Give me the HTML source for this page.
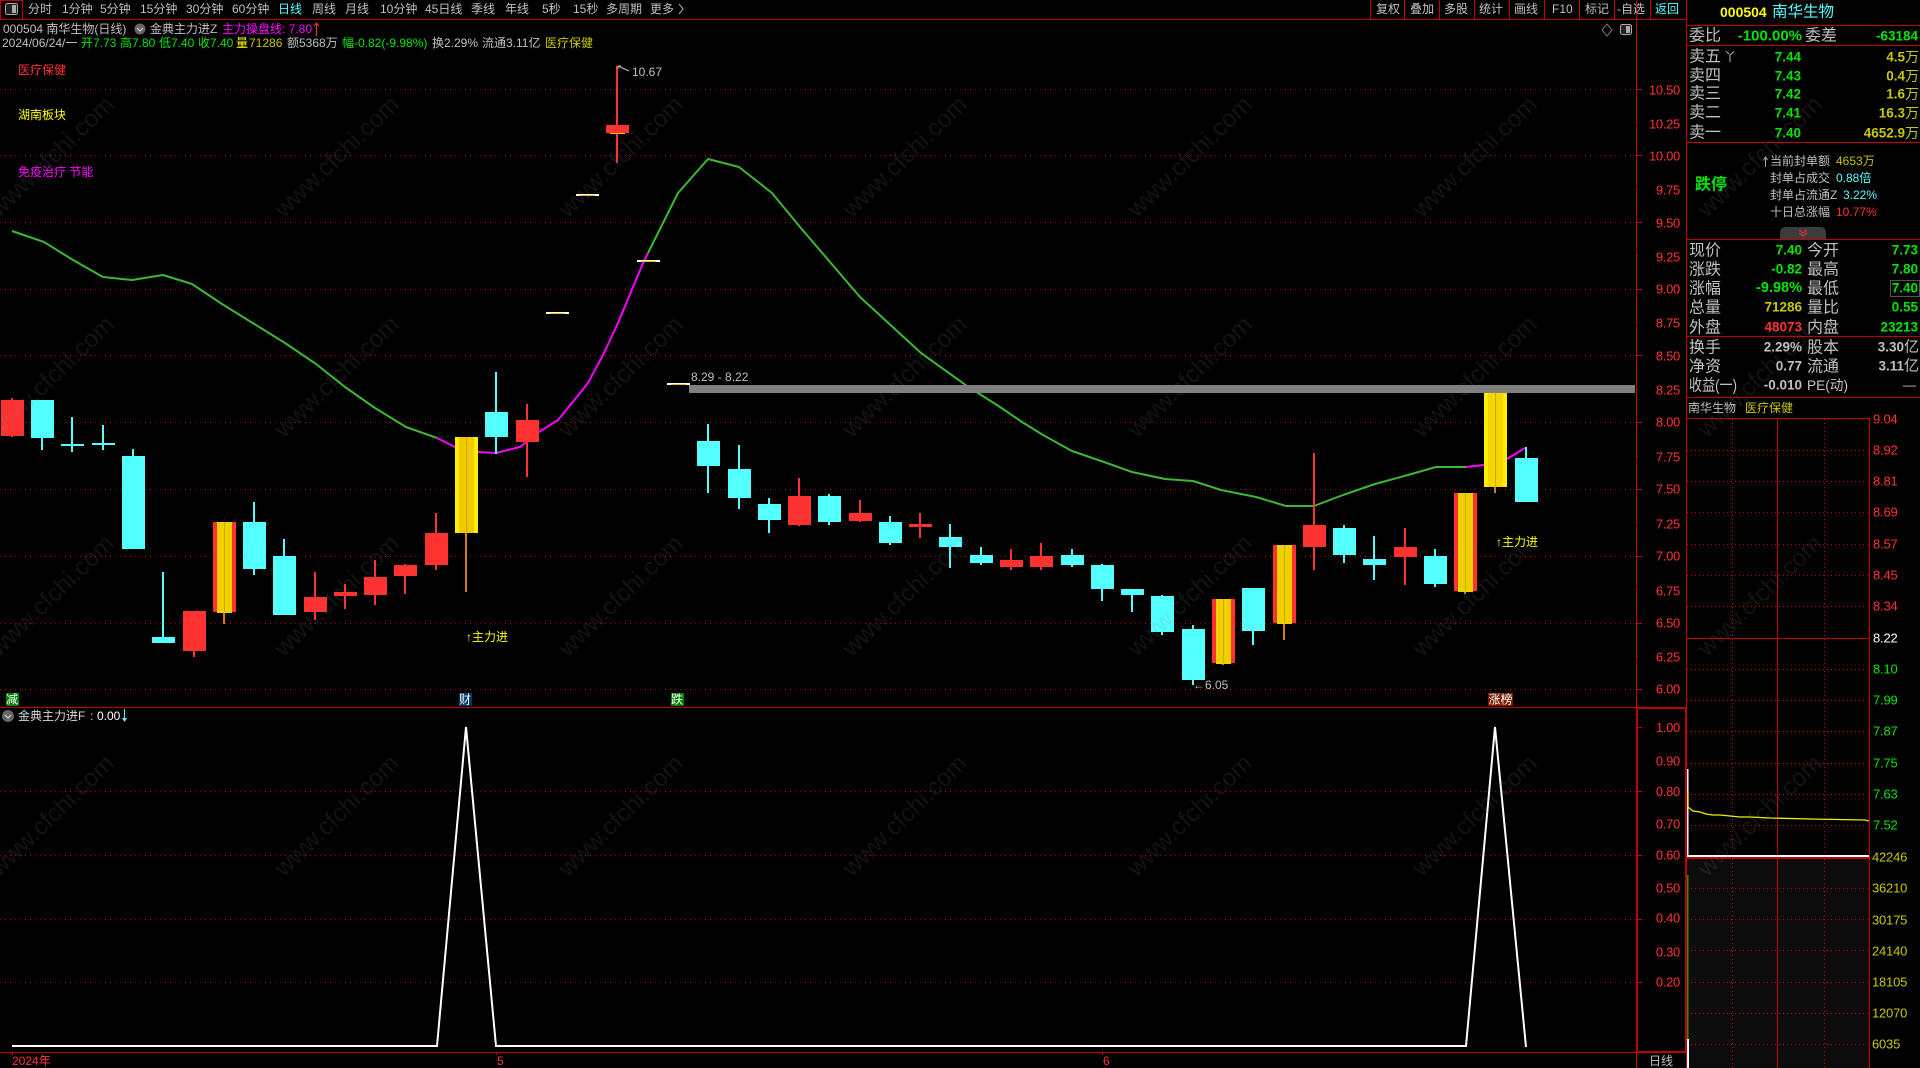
<!DOCTYPE html>
<html lang="zh"><head><meta charset="utf-8"><title>000504 南华生物</title>
<style>
html,body{margin:0;padding:0;background:#000;overflow:hidden;width:1920px;height:1068px}
svg{position:absolute;left:0;top:0;display:block;font-family:"Liberation Sans","Noto Sans CJK SC",sans-serif}
text{dominant-baseline:central;white-space:pre}
.t{font-size:12px;fill:#c0c0c0}
.r{fill:#ff3232}.g{fill:#00e600}.c{fill:#54ffff}.y{fill:#ffff00}.d{fill:#c8c800}.m{fill:#ff00ff}.w{fill:#fff}
.ax text{font-size:13px;fill:#ff3232;text-anchor:end;letter-spacing:-.3px}
.l{font-size:16px;fill:#c0c0c0}
.l2{font-size:16px;fill:#c0c0c0;transform:translateY(1px)}
.v{font-size:13.5px;font-weight:bold;text-anchor:end}
.wm text{font-size:24.5px;fill:rgba(128,128,128,.15);text-anchor:middle}
.q{font-size:12px}
</style></head><body>
<svg width="1920" height="1068" viewBox="0 0 1920 1068">
<rect width="1920" height="1068" fill="#000"/>
<!-- main grid -->
<g stroke="#b00000" stroke-dasharray="1 4" fill="none">
<path d="M0 89.500H1636M0 155.500H1636M0 222.500H1636M0 289.500H1636M0 355.500H1636M0 422.500H1636M0 489.500H1636M0 556.500H1636M0 623.500H1636M0 689.500H1636"/>
<path d="M0 791.500H1636M0 855.500H1636M0 919.500H1636M0 982.500H1636"/>
</g>
<!-- MA line -->
<g fill="none" stroke-width="2" stroke-linejoin="round">
<path stroke="#3cb832" d="M12 231L44 242L73 260L103 277L132 280L163 275L192 284L222 304L251 322L285 343L316 364L345 387L375 408L406 427L437 438"/>
<path stroke="#ff00ff" d="M437 438L455 447L478 452L496 453L520 447L539 432L558 420L580 393L588 383L603 355L618 323L633 287L643 263L648 253"/>
<path stroke="#3cb832" d="M648 253L678 193L708 159L739 167L772 193L800 227L860 297L921 353L967 386L1000 407L1022 422L1043 435L1072 451L1104 462L1132 472L1165 479L1193 481L1221 490L1256 497L1286 506L1314 506L1343 495L1375 484L1408 475L1436 467L1466 467"/>
<path stroke="#ff00ff" d="M1466 467L1484 465L1507 459L1525 448"/>
</g>
<!-- grey bar -->
<rect x="689" y="385" width="946" height="8" fill="#808080"/>
<text x="691" y="377" class="t" fill="#b0b0b0">8.29 - 8.22</text>
<!-- candles: wicks -->
<path fill="none" stroke="#54ffff" stroke-width="2" d="M42 438V450M72 417V452M103 425V450M133 449V456M163 572V637M254 502V575M284 539V556M496 372V454M708 424V493M739 445V509M769 498V533M829 494V525M890 516V545M950 524V568M981 547V565M1072 549V567M1102 564V601M1132 595V612M1162 595V635M1193 625V685M1253 631V645M1344 525V563M1374 536V580M1435 549V587M1526 447V458"/>
<path fill="none" stroke="#ff3232" stroke-width="2" d="M12 398V437M194 651V657M315 572V620M345 584V609M375 560V605M405 564V594M436 513V570M527 404V477M617 66V163M799 478V526M860 500V522M920 513V538M1011 549V570M1041 543V570M1314 453V570M1405 528V585"/>
<path fill="none" stroke="#d08010" stroke-width="2" d="M224 612V624M466 533V592M1223 663V665M1284 623V640M1465 591V594M1495 487V493"/>
<!-- candles: bodies -->
<path fill="#54ffff" d="M31 400h23v38h-23zM61 444h23v2h-23zM92 443h23v2h-23zM122 456h23v93h-23zM152 637h23v6h-23zM243 522h23v47h-23zM273 556h23v59h-23zM485 412h23v25h-23zM697 441h23v25h-23zM728 469h23v29h-23zM758 504h23v16h-23zM818 496h23v26h-23zM879 522h23v21h-23zM939 537h23v10h-23zM970 555h23v8h-23zM1061 555h23v10h-23zM1091 565h23v24h-23zM1121 589h23v6h-23zM1151 596h23v36h-23zM1182 629h23v51h-23zM1242 588h23v43h-23zM1333 528h23v27h-23zM1363 559h23v6h-23zM1424 556h23v28h-23zM1515 458h23v44h-23z"/>
<path fill="#ff3232" d="M1 400h23v36h-23zM183 611h23v40h-23zM304 597h23v15h-23zM334 592h23v4h-23zM364 577h23v18h-23zM394 565h23v11h-23zM425 533h23v32h-23zM516 420h23v22h-23zM606 125h23v8h-23zM788 496h23v29h-23zM849 513h23v8h-23zM909 524h23v3h-23zM1000 560h23v7h-23zM1030 556h23v11h-23zM1303 525h23v22h-23zM1394 547h23v10h-23zM213 522h23v90h-23zM1212 599h23v64h-23zM1273 545h23v78h-23zM1454 493h23v98h-23z"/>
<path fill="#f0d000" d="M217 522h15v91h-15zM1216 599h15v65h-15zM1277 545h15v79h-15zM1458 493h15v99h-15z"/>
<path fill="#ffee00" d="M455 437h23v96h-23zM1484 393h23v94h-23z"/>
<path fill="#eecc00" d="M459 437h15v96h-15z"/>
<path fill="#f2d800" d="M1488 393h15v94h-15z"/>
<path fill="none" stroke="#d4a800" d="M224.500 522V612M1223.500 599V663M1284.500 545V623M1465.500 493V591M466.500 437V533M1495.500 393V487"/>
<!-- white dashes -->
<path fill="#fff" d="M546 312h23v2h-23zM576 194h23v2h-23zM637 260h23v2h-23zM667 383h23v2h-23z"/>
<path fill="#e8c800" d="M550 313h15v1h-15zM580 195h15v1h-15zM641 261h15v1h-15zM671 384h15v1h-15zM610 133h15v1h-15z"/>
<!-- high/low notes -->
<path fill="none" stroke="#c0c0c0" d="M618 66L629 71M618 66h3M618 66v3"/>
<text x="632" y="72" class="t">10.67</text>
<text x="1193" y="685" class="t">←6.05</text>
<text x="466" y="637" class="q y">↑主力进</text>
<text x="1496" y="542" class="q y">↑主力进</text>
<!-- tags -->
<rect x="6" y="693" width="13" height="13" fill="#008000"/><text x="6" y="699.500" class="q w">减</text>
<rect x="459" y="693" width="13" height="13" fill="#003366"/><text x="459" y="699.500" class="q w">财</text>
<rect x="671" y="693" width="13" height="13" fill="#008000"/><text x="671" y="699.500" class="q w">跌</text>
<rect x="1488" y="693" width="25" height="13" fill="#7a1a00"/><text x="1488.500" y="699.500" class="q w">涨榜</text>
<!-- labels -->
<text x="18" y="70" class="q r">医疗保健</text>
<text x="18" y="115" class="q y">湖南板块</text>
<text x="18" y="172" class="q m">免疫治疗 节能</text>
<!-- lower panel line -->
<path fill="none" stroke="#fff" stroke-width="2" d="M12 1046H437L466 727L496 1046H1466L1495 727L1526 1047"/>
<!-- chart separators -->
<g fill="#c00000">
<rect x="0" y="19" width="1686" height="1"/>
<rect x="0" y="707" width="1686" height="1"/>
<rect x="0" y="1052" width="1636" height="1"/>
<rect x="1636" y="0" width="1" height="1068"/>
<rect x="1636" y="707" width="2" height="345"/>
<rect x="1636" y="707" width="50" height="2"/>
<rect x="1636" y="1051" width="50" height="2"/>
<rect x="1686" y="0" width="1" height="1068"/>
<rect x="1685" y="707" width="2" height="345"/>
</g>
<g stroke="#c00000"><path d="M1636 89.500h6M1636 122.500h2M1636 155.500h6M1636 189.500h2M1636 222.500h6M1636 255.500h2M1636 289.500h6M1636 322.500h2M1636 355.500h6M1636 389.500h2M1636 422.500h6M1636 456.500h2M1636 489.500h6M1636 522.500h2M1636 556.500h6M1636 589.500h2M1636 623.500h6M1636 656.500h2M1636 689.500h6M1636 727.500h6M1636 759.500h2M1636 791.500h6M1636 823.500h2M1636 855.500h6M1636 887.500h2M1636 919.500h6M1636 951.500h2M1636 982.500h6"/></g>
<g class="ax">
<text x="1680" y="90">10.50</text><text x="1680" y="124">10.25</text><text x="1680" y="156">10.00</text><text x="1680" y="190">9.75</text><text x="1680" y="223">9.50</text><text x="1680" y="257">9.25</text><text x="1680" y="289">9.00</text><text x="1680" y="323">8.75</text><text x="1680" y="356">8.50</text><text x="1680" y="390">8.25</text><text x="1680" y="422">8.00</text><text x="1680" y="457">7.75</text><text x="1680" y="489">7.50</text><text x="1680" y="524">7.25</text><text x="1680" y="556">7.00</text><text x="1680" y="591">6.75</text><text x="1680" y="623">6.50</text><text x="1680" y="657">6.25</text><text x="1680" y="689">6.00</text>
<text x="1680" y="727.500">1.00</text><text x="1680" y="761">0.90</text><text x="1680" y="791.500">0.80</text><text x="1680" y="824">0.70</text><text x="1680" y="855">0.60</text><text x="1680" y="888">0.50</text><text x="1680" y="918">0.40</text><text x="1680" y="952">0.30</text><text x="1680" y="982">0.20</text>
</g>
<!-- lower header -->
<circle cx="8" cy="716" r="6" fill="#666"/><path d="M5 715l3 3 3-3" fill="none" stroke="#ddd"/>
<text x="18" y="716" class="q" fill="#d8d8d8">金典主力进F</text>
<text x="90" y="716" class="q" fill="#d8d8d8">:</text>
<text x="97" y="716" class="q w">0.00</text>
<path d="M124.500 709V718" fill="none" stroke="#54ffff"/><path d="M122 718h5l-2.500 4z" fill="#54ffff"/>
<!-- bottom axis -->
<text x="12" y="1061" class="q r">2024年</text>
<text x="497" y="1061" class="q r">5</text>
<text x="1103" y="1061" class="q r">6</text>
<path d="M12.500 1052v3M496.500 1052v3M1102.500 1052v3" stroke="#c00000"/>
<text x="1649" y="1061" class="t">日线</text>
<!-- top toolbar -->
<rect x="0.500" y="0.500" width="22" height="19" fill="none" stroke="#c00000"/>
<rect x="5.500" y="3.500" width="12" height="11" rx="2" fill="#222" stroke="#aaa"/><rect x="12" y="5" width="4" height="8" fill="#aaa"/>
<g class="t">
<text x="28" y="9">分时</text><text x="62" y="9">1分钟</text><text x="100" y="9">5分钟</text><text x="140" y="9">15分钟</text><text x="186" y="9">30分钟</text><text x="232" y="9">60分钟</text><text x="278" y="9" class="c">日线</text><text x="312" y="9">周线</text><text x="345" y="9">月线</text><text x="380" y="9">10分钟</text><text x="425" y="9">45日线</text><text x="471" y="9">季线</text><text x="505" y="9">年线</text><text x="542" y="9">5秒</text><text x="573" y="9">15秒</text><text x="606" y="9">多周期</text><text x="650" y="9">更多</text>
<path d="M679 4l4 5-4 5" fill="none" stroke="#c0c0c0"/>
<text x="1376" y="9">复权</text><text x="1410" y="9">叠加</text><text x="1444" y="9">多股</text><text x="1479" y="9">统计</text><text x="1514" y="9">画线</text><text x="1552" y="9">F10</text><text x="1585" y="9">标记</text><text x="1617" y="9">-自选</text><text x="1655" y="9" class="c">返回</text>
</g>
<path stroke="#c00000" d="M1370.500 0V19M1404.500 0V19M1439.500 0V19M1474.500 0V19M1509.500 0V19M1544.500 0V19M1579.500 0V19M1614.500 0V19M1650.500 0V19"/>
<!-- info rows -->
<text x="3" y="29" class="t">000504 南华生物(日线)</text>
<circle cx="140" cy="29" r="5.500" fill="#666"/><path d="M137 28l3 3 3-3" fill="none" stroke="#ddd"/>
<text x="150" y="29" class="t">金典主力进Z</text>
<text x="222" y="29" class="q m">主力操盘线: 7.80</text>
<path d="M316.500 23V36M314 26l2.500-3 2.500 3" fill="none" stroke="#ff3232"/>
<g class="q">
<text x="2" y="43" fill="#c0c0c0">2024/06/24/一</text>
<text x="81" y="43" class="g">开7.73</text><text x="120" y="43" class="g">高7.80</text><text x="159" y="43" class="g">低7.40</text><text x="198" y="43" class="g">收7.40</text>
<text x="236" y="43" class="y">量</text><text x="249" y="43" class="d">71286</text>
<text x="287" y="43" fill="#c0c0c0">额5368万</text>
<text x="342" y="43" class="g">幅-0.82(-9.98%)</text>
<text x="432" y="43" fill="#c0c0c0">换2.29%</text><text x="482" y="43" fill="#c0c0c0">流通3.11亿</text>
<text x="545" y="43" class="d">医疗保健</text>
</g>
<!-- icons at chart top right -->
<path d="M1607 24l5 6-5 6-5-6z" fill="none" stroke="#777"/>
<rect x="1620.500" y="24.500" width="11" height="10" rx="2" fill="#222" stroke="#aaa"/><rect x="1626" y="26" width="4" height="7" fill="#aaa"/>
<!-- right panel -->
<text x="1720" y="12" font-size="14" font-weight="bold" class="y">000504</text>
<text x="1772" y="12" font-size="15.500" class="c">南华生物</text>
<path stroke="#c00000" d="M1687 25.500H1920M1687 45.500H1920M1687 142.500H1920M1687 239.500H1920M1687 336.500H1920M1687 397.500H1920"/>
<text x="1689" y="36" class="l">委比</text>
<text x="1802" y="36" class="v g" style="font-size:15px">-100.00%</text>
<text x="1805" y="36" class="l">委差</text>
<text x="1918" y="36" class="v g">-63184</text>
<g>
<text x="1689" y="57" class="l">卖五</text><text x="1724" y="57" class="q" fill="#c0c0c0">丫</text><text x="1801" y="57" class="v g">7.44</text><text x="1905" y="57" class="v d">4.5</text><text x="1905" y="57" font-size="14" class="d">万</text>
<text x="1689" y="76" class="l">卖四</text><text x="1801" y="76" class="v g">7.43</text><text x="1905" y="76" class="v d">0.4</text><text x="1905" y="76" font-size="14" class="d">万</text>
<text x="1689" y="94" class="l">卖三</text><text x="1801" y="94" class="v g">7.42</text><text x="1905" y="94" class="v d">1.6</text><text x="1905" y="94" font-size="14" class="d">万</text>
<text x="1689" y="113" class="l">卖二</text><text x="1801" y="113" class="v g">7.41</text><text x="1905" y="113" class="v d">16.3</text><text x="1905" y="113" font-size="14" class="d">万</text>
<text x="1689" y="133" class="l">卖一</text><text x="1801" y="133" class="v g">7.40</text><text x="1905" y="133" class="v d">4652.9</text><text x="1905" y="133" font-size="14" class="d">万</text>
</g>
<text x="1695" y="185" font-size="16" font-weight="bold" class="g">跌停</text>
<path d="M1765.500 157v10M1763.500 160l2-3 2 3" fill="none" stroke="#aaa"/>
<g class="q">
<text x="1770" y="161" fill="#c0c0c0">当前封单额</text><text x="1836" y="161" class="d">4653万</text>
<text x="1770" y="178" fill="#c0c0c0">封单占成交</text><text x="1836" y="178" class="c">0.88倍</text>
<text x="1770" y="195" fill="#c0c0c0">封单占流通Z</text><text x="1843" y="195" class="c">3.22%</text>
<text x="1770" y="212" fill="#c0c0c0">十日总涨幅</text><text x="1836" y="212" class="r">10.77%</text>
</g>
<path d="M1780 239v-7a5 5 0 0 1 5-5h36a5 5 0 0 1 5 5v7z" fill="#3c3c3c"/>
<path d="M1799 233l4 3 4-3M1799 230l4 3 4-3" fill="none" stroke="#ff3232"/>
<g>
<text x="1689" y="250" class="l2">现价</text><text x="1802" y="250" class="v g">7.40</text><text x="1807" y="250" class="l2">今开</text><text x="1918" y="250" class="v g">7.73</text>
<text x="1689" y="269" class="l2">涨跌</text><text x="1802" y="269" class="v g">-0.82</text><text x="1807" y="269" class="l2">最高</text><text x="1918" y="269" class="v g">7.80</text>
<text x="1689" y="288" class="l2">涨幅</text><text x="1802" y="288" class="v g" style="font-size:14.500px">-9.98%</text><text x="1807" y="288" class="l2">最低</text><rect x="1890.500" y="280.500" width="29" height="16" fill="none" stroke="#555"/><text x="1918" y="288" class="v g">7.40</text>
<text x="1689" y="307" class="l2">总量</text><text x="1802" y="307" class="v d">71286</text><text x="1807" y="307" class="l2">量比</text><text x="1918" y="307" class="v g">0.55</text>
<text x="1689" y="327" class="l2">外盘</text><text x="1802" y="327" class="v r">48073</text><text x="1807" y="327" class="l2">内盘</text><text x="1918" y="327" class="v g">23213</text>
<text x="1689" y="347" class="l2">换手</text><text x="1802" y="347" class="v" fill="#c0c0c0">2.29%</text><text x="1807" y="347" class="l2">股本</text><text x="1904" y="347" class="v" fill="#c0c0c0">3.30</text><text x="1904" y="347" font-size="15" fill="#c0c0c0">亿</text>
<text x="1689" y="366" class="l2">净资</text><text x="1802" y="366" class="v" fill="#c0c0c0">0.77</text><text x="1807" y="366" class="l2">流通</text><text x="1904" y="366" class="v" fill="#c0c0c0">3.11</text><text x="1904" y="366" font-size="15" fill="#c0c0c0">亿</text>
<text x="1689" y="385" class="l2" textLength="48" lengthAdjust="spacingAndGlyphs">收益(一)</text><text x="1802" y="385" class="v" fill="#c0c0c0">-0.010</text><text x="1807" y="385" font-size="14" fill="#c8c8c8" textLength="41" lengthAdjust="spacingAndGlyphs">PE(动)</text><text x="1903" y="385" font-size="13" fill="#c0c0c0">—</text>
</g>
<text x="1688" y="408" class="q" fill="#c0c0c0">南华生物</text><text x="1745" y="408" class="q d">医疗保健</text>
<!-- mini chart -->
<rect x="1687" y="858" width="182" height="210" fill="#0c0c0c"/>
<g stroke="#c00000" fill="none" stroke-dasharray="1 3">
<path d="M1687 450.500H1869M1687 481.500H1869M1687 512.500H1869M1687 544.500H1869M1687 575.500H1869M1687 606.500H1869M1687 669.500H1869M1687 700.500H1869M1687 731.500H1869M1687 763.500H1869M1687 794.500H1869M1687 825.500H1869M1687 888.500H1869M1687 919.500H1869M1687 950.500H1869M1687 982.500H1869M1687 1013.500H1869M1687 1044.500H1869"/>
<path d="M1732.500 419V1068M1824.500 419V1068"/>
</g>
<path stroke="#c00000" fill="none" d="M1687 418.500H1869M1687 638.500H1869M1777.500 418V1068M1869.500 418V1068"/>
<rect x="1687" y="857" width="182" height="2" fill="#c00000"/>
<rect x="1687" y="855" width="182" height="2" fill="#fff"/>
<rect x="1687" y="769" width="1.500" height="87" fill="#fff"/>
<rect x="1687" y="875" width="1.500" height="164" fill="#2e8b00"/>
<rect x="1687" y="1039" width="2" height="29" fill="#fff"/>
<path fill="none" stroke="#f0f000" stroke-width="1.300" d="M1688 792V807L1693 811L1700 812L1706 814L1713 815L1720 815L1730 816L1740 817L1750 817L1770 818L1810 819L1865 820L1869 821"/>
<g font-size="13" letter-spacing="-.2">
<text x="1873" y="419" class="r">9.04</text><text x="1873" y="450" class="r">8.92</text><text x="1873" y="481" class="r">8.81</text><text x="1873" y="512" class="r">8.69</text><text x="1873" y="544" class="r">8.57</text><text x="1873" y="575" class="r">8.45</text><text x="1873" y="606" class="r">8.34</text><text x="1873" y="638" class="w">8.22</text><text x="1873" y="669" class="g">8.10</text><text x="1873" y="700" class="g">7.99</text><text x="1873" y="731" class="g">7.87</text><text x="1873" y="763" class="g">7.75</text><text x="1873" y="794" class="g">7.63</text><text x="1873" y="825" class="g">7.52</text>
<text x="1872" y="857" class="d">42246</text><text x="1872" y="888" class="d">36210</text><text x="1872" y="920" class="d">30175</text><text x="1872" y="951" class="d">24140</text><text x="1872" y="982" class="d">18105</text><text x="1872" y="1013" class="d">12070</text><text x="1872" y="1044" class="d">6035</text>
</g>
<!-- watermark -->
<g class="wm">
<text transform="translate(52 157) rotate(-44)">www.cfchi.com</text><text transform="translate(337 157) rotate(-44)">www.cfchi.com</text><text transform="translate(621 157) rotate(-44)">www.cfchi.com</text><text transform="translate(905 157) rotate(-44)">www.cfchi.com</text><text transform="translate(1190 157) rotate(-44)">www.cfchi.com</text><text transform="translate(1475 157) rotate(-44)">www.cfchi.com</text><text transform="translate(1760 157) rotate(-44)">www.cfchi.com</text>
<text transform="translate(52 377) rotate(-44)">www.cfchi.com</text><text transform="translate(337 377) rotate(-44)">www.cfchi.com</text><text transform="translate(621 377) rotate(-44)">www.cfchi.com</text><text transform="translate(905 377) rotate(-44)">www.cfchi.com</text><text transform="translate(1190 377) rotate(-44)">www.cfchi.com</text><text transform="translate(1475 377) rotate(-44)">www.cfchi.com</text><text transform="translate(1760 377) rotate(-44)">www.cfchi.com</text>
<text transform="translate(52 596) rotate(-44)">www.cfchi.com</text><text transform="translate(337 596) rotate(-44)">www.cfchi.com</text><text transform="translate(621 596) rotate(-44)">www.cfchi.com</text><text transform="translate(905 596) rotate(-44)">www.cfchi.com</text><text transform="translate(1190 596) rotate(-44)">www.cfchi.com</text><text transform="translate(1475 596) rotate(-44)">www.cfchi.com</text><text transform="translate(1760 596) rotate(-44)">www.cfchi.com</text>
<text transform="translate(52 816) rotate(-44)">www.cfchi.com</text><text transform="translate(337 816) rotate(-44)">www.cfchi.com</text><text transform="translate(621 816) rotate(-44)">www.cfchi.com</text><text transform="translate(905 816) rotate(-44)">www.cfchi.com</text><text transform="translate(1190 816) rotate(-44)">www.cfchi.com</text><text transform="translate(1475 816) rotate(-44)">www.cfchi.com</text><text transform="translate(1760 816) rotate(-44)">www.cfchi.com</text>
</g>
</svg>
</body></html>
